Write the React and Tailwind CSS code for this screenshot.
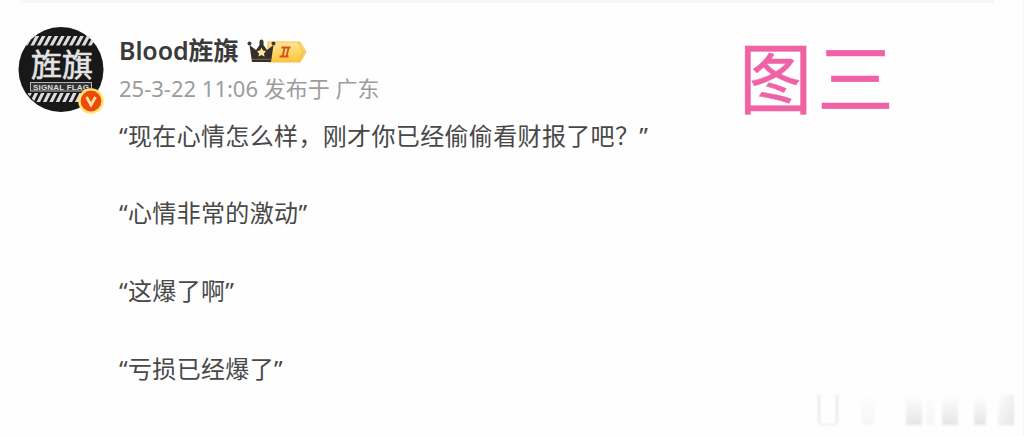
const post = {
  author: 'Blood旌旗',
  meta: '25-3-22 11:06 发布于 广东',
  lines: [
    '“现在心情怎么样，刚才你已经偷偷看财报了吧？”',
    '“心情非常的激动”',
    '“这爆了啊”',
    '“亏损已经爆了”',
  ],
}

const stripes = [0, 1, 2, 3, 4, 5, 6, 7, 8, 9, 10]

function Avatar() {
  return (
    <div className="relative h-[86px] w-[86px] shrink-0">
      <svg viewBox="0 0 86 86" className="h-full w-full">
        <defs>
          <clipPath id="stripe-clip">
            <path d="M14 9H72L78 18.5H8ZM9 66H64V75H17Z" />
          </clipPath>
        </defs>
        <circle cx="43" cy="42.5" r="42.5" fill="#181818" />
        <g clipPath="url(#stripe-clip)" stroke="#dcdcdc" strokeWidth="3.2">
          {stripes.map((i) => (
            <path key={i} d={`M${7 + i * 6.4} 20L${14 + i * 6.4} 7M${6 + i * 6.4} 78L${13 + i * 6.4} 64`} />
          ))}
        </g>
        <text x="13" y="48.5" fontSize="31" fill="#e4e4e4" stroke="#e4e4e4" strokeWidth="0.6" fontFamily="Noto Sans CJK SC, sans-serif">旌旗</text>
        <rect x="12.5" y="55.5" width="61" height="8.5" fill="#333" stroke="#b5b5b5" strokeWidth="1" />
        <text x="15" y="62.7" fontSize="8" textLength="56" lengthAdjust="spacing" fontWeight="700" fill="#dedede" fontFamily="Liberation Sans, sans-serif">SIGNAL FLAG</text>
      </svg>
      {/* Verified mark */}
      <svg viewBox="0 0 26 26" className="absolute left-[60px] top-[61px] h-[26px] w-[26px]">
        <circle cx="13" cy="13" r="12.8" fill="#ffe36e" />
        <circle cx="13" cy="13" r="10.4" fill="#ec4a0a" />
        <path d="M8.5 9L13 17L17.5 9" fill="none" stroke="#ffdf9b" strokeWidth="2.8" />
      </svg>
    </div>
  )
}

function VipBadge() {
  return (
    <svg viewBox="0 0 62 26" className="h-[26px] w-[62px]">
      <defs>
        <linearGradient id="gold" x1="0" y1="0" x2="0" y2="1">
          <stop offset="0" stopColor="#ffe795" />
          <stop offset="1" stopColor="#ffc43b" />
        </linearGradient>
      </defs>
      <path d="M21 3H53L59 13L53 23H21Z" fill="url(#gold)" stroke="#f3bd50" strokeWidth="1" />
      <path d="M51 3.5L56.5 13L51 22.5" fill="none" stroke="#f4b83d" strokeWidth="1" />
      <path d="M5 23L2.5 6L9 11L12.5 6V3H16.5V6L20 11L26.5 6L24 23Z" fill="#35302c" />
      <circle cx="2.5" cy="4.5" r="2" fill="#493c25" />
      <circle cx="14.5" cy="2.5" r="2" fill="#493c25" />
      <circle cx="26.5" cy="4.5" r="2" fill="#493c25" />
      <path d="M14.5 8.5L16 11.5L19 12L17 14.5L17.5 17.5L14.5 16L11.5 17.5L12 14.5L10 12L13 11.5Z" fill="#ffe49b" />
      <path d="M5 20.3H24" stroke="#8d7654" strokeWidth="0.8" />
      <path d="M34.5 8.5H43.5M32.5 17.5H41.5M37.5 9L35.7 17M41.5 9L39.7 17" stroke="#d45117" strokeWidth="1.8" />
    </svg>
  )
}

function FadedMark() {
  return (
    <div className="flex h-[30px] w-[196px] items-stretch blur-[1px]">
      <div className="w-5 rounded-b-sm border-x-2 border-b border-neutral-200" />
      <div className="ml-6 w-3 bg-linear-to-b from-transparent to-neutral-100" />
      <div className="ml-8 w-4 bg-linear-to-b from-transparent to-neutral-200" />
      <div className="ml-1 w-2 bg-linear-to-b from-transparent to-neutral-100" />
      <div className="ml-2 w-4 bg-linear-to-b from-transparent to-neutral-200" />
      <div className="ml-4 w-3 bg-linear-to-b from-transparent to-neutral-200" />
      <div className="ml-3 flex-1 bg-linear-to-br from-transparent to-neutral-200" />
    </div>
  )
}

export default function App() {
  return (
    <div className="relative h-[436px] w-[1024px] overflow-hidden bg-[#fefefe] font-['Noto_Sans','Noto_Sans_CJK_SC',sans-serif]">
      <div className="ml-5 h-[3px] w-[974px] bg-[#f7f7f7]" />
      <article className="flex pl-[18px] pt-6">
        <Avatar />
        <div className="ml-[15px] pt-[7px]">
          <header>
            <div className="flex h-8 items-center">
              <h1 className="w-[120px] whitespace-nowrap text-[25px] font-semibold leading-8 tracking-[-0.1px] text-[#3a3a3a]">{post.author}</h1>
              <div className="ml-2 pt-1">
                <VipBadge />
              </div>
            </div>
            <p className="mt-1.5 whitespace-nowrap text-[22px] leading-8 text-[#9c9c9c]">{post.meta}</p>
          </header>
          <div className="mt-[16.5px] flex flex-col gap-[47.7px]">
            {post.lines.map((line) => (
              <p key={line} className="whitespace-nowrap text-[24px] leading-[30px] tracking-[0.35px] text-[#484848]">{line}</p>
            ))}
          </div>
        </div>
      </article>
      {/* Caption laid over the post */}
      <div className="absolute left-[737px] top-[30px] flex whitespace-nowrap font-['Noto_Sans_CJK_SC',sans-serif] text-[77px] leading-[90px] text-[#f062a6]">
        <span className="inline-block origin-center scale-x-95 [-webkit-text-stroke:0.5px_#f062a6]">图</span>
        <span className="ml-[3px] inline-block [-webkit-text-stroke:0.5px_#f062a6]">三</span>
      </div>
      <div className="absolute left-[818px] top-[395px]">
        <FadedMark />
      </div>
      <div className="absolute right-0 top-0 h-full w-px bg-[#f7f7f7]" />
    </div>
  )
}
